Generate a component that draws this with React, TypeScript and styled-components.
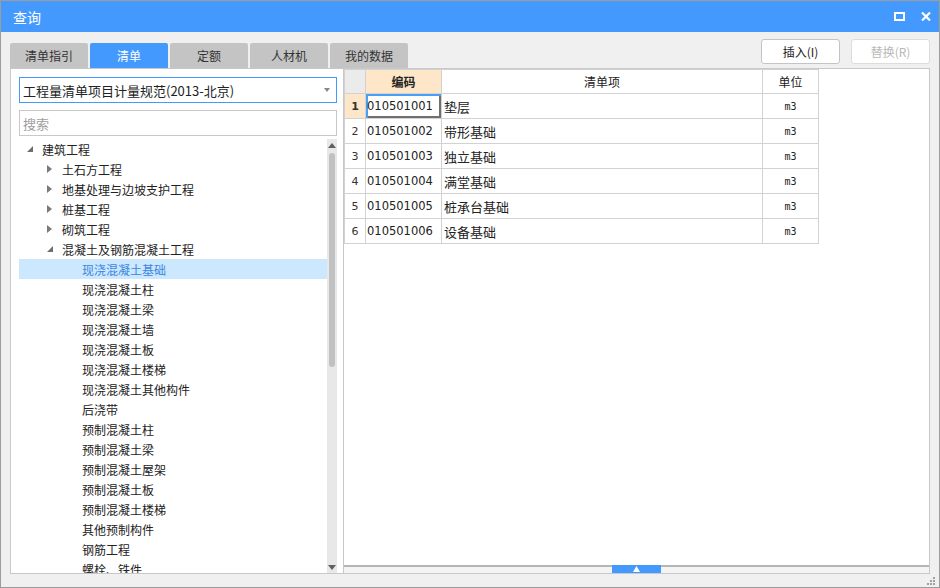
import React from 'react';
import styled, { createGlobalStyle } from 'styled-components';

const GlobalStyle = createGlobalStyle`
  html, body {
    margin: 0;
    padding: 0;
    background: #ffffff;
  }
  * {
    box-sizing: border-box;
  }
`;

const cjk = `"Noto Sans CJK SC", "Noto Sans", sans-serif`;
const blue = '#4499ff';

const Window = styled.div`
  position: relative;
  width: 940px;
  height: 588px;
  border: 1px solid #9c9c9c;
  display: flex;
  flex-direction: column;
  font-family: ${cjk};
  background: #f0f0f0;
  overflow: hidden;
`;

const TitleBar = styled.div`
  height: 31px;
  flex: none;
  background: ${blue};
  color: #fff;
  display: flex;
  align-items: center;
  justify-content: space-between;
  padding: 0 8px 0 12px;
  font-size: 14px;
`;

const TitleIcons = styled.div`
  display: flex;
  align-items: center;
  gap: 16px;
`;

const Body = styled.div`
  flex: 1;
  display: flex;
  flex-direction: column;
  padding: 0 9px 13px 9px;
  min-height: 0;
`;

const TopRow = styled.div`
  height: 36px;
  flex: none;
  display: flex;
  justify-content: space-between;
`;

const Tabs = styled.div`
  display: flex;
  gap: 2px;
  align-self: flex-end;
`;

const Tab = styled.div<{ $active?: boolean }>`
  width: 78px;
  height: 25px;
  border-radius: 2px 2px 0 0;
  background: ${p => (p.$active ? blue : '#c4c4c4')};
  color: ${p => (p.$active ? '#fff' : '#333')};
  font-size: 12px;
  display: flex;
  align-items: center;
  justify-content: center;
`;

const Buttons = styled.div`
  display: flex;
  gap: 11px;
  padding-top: 7px;
`;

const Button = styled.button<{ $disabled?: boolean }>`
  width: 79px;
  height: 25px;
  padding: 0;
  border: 1px solid ${p => (p.$disabled ? '#dcdcdc' : '#c4c4c4')};
  border-radius: 3px;
  background: #fff;
  color: ${p => (p.$disabled ? '#b8b8b8' : '#222')};
  font-family: ${cjk};
  font-size: 12px;
`;

const Main = styled.div`
  flex: 1;
  display: flex;
  min-height: 0;
`;

const LeftPanel = styled.div`
  width: 333px;
  flex: none;
  background: #fff;
  border: 1px solid #c8c8c8;
  border-right: none;
  padding: 8px 0 0 8px;
  display: flex;
  flex-direction: column;
  min-height: 0;
`;

const Select = styled.div`
  width: 318px;
  height: 26px;
  border: 1px solid ${blue};
  display: flex;
  align-items: center;
  justify-content: space-between;
  padding: 0 6px 0 3px;
  font-size: 13px;
  color: #222;
`;

const Caret = styled.span`
  width: 0;
  height: 0;
  border-left: 3px solid transparent;
  border-right: 3px solid transparent;
  border-top: 4px solid #888;
`;

const Search = styled.div`
  width: 318px;
  height: 26px;
  margin-top: 7px;
  border: 1px solid #c8c8c8;
  display: flex;
  align-items: center;
  padding: 0 3px;
  font-size: 13px;
  color: #a0a0a0;
`;

const TreeWrap = styled.div`
  flex: 1;
  width: 318px;
  margin-top: 3px;
  display: flex;
  min-height: 0;
  overflow: hidden;
`;

const TreeList = styled.div`
  flex: 1;
  overflow: hidden;
`;

const TreeRow = styled.div<{ $level: number; $selected?: boolean }>`
  height: 20px;
  display: flex;
  align-items: center;
  padding-left: ${p => 4 + p.$level * 20}px;
  background: ${p => (p.$selected ? '#cce8ff' : 'transparent')};
  color: ${p => (p.$selected ? '#3a86e0' : '#222')};
  font-size: 12px;
  white-space: nowrap;
`;

const Arrow = styled.span`
  width: 19px;
  flex: none;
  display: flex;
  align-items: center;
  padding-left: 4px;
`;

const Scrollbar = styled.div`
  width: 10px;
  flex: none;
  background: #e8e8e8;
  display: flex;
  flex-direction: column;
  align-items: center;
  padding-top: 4px;
`;

const ScrollThumb = styled.div`
  width: 6px;
  height: 214px;
  margin-top: 5px;
  border-radius: 3px;
  background: #c1c1c1;
`;

const ScrollSpacer = styled.div`
  flex: 1;
`;

const RightPanel = styled.div`
  flex: 1;
  background: #fff;
  border: 1px solid #c8c8c8;
  display: flex;
  flex-direction: column;
  min-height: 0;
`;

const TableArea = styled.div`
  flex: 1;
`;

const Grid = styled.table`
  border-collapse: collapse;
  table-layout: fixed;
  width: 474px;
`;

const HeadCell = styled.th<{ $accent?: boolean; $corner?: boolean }>`
  height: 24px;
  padding: 0;
  border: 1px solid #d2d2d2;
  font-size: 12px;
  font-weight: ${p => (p.$accent ? 700 : 400)};
  color: #222;
  background: ${p => (p.$accent ? '#fee6c8' : p.$corner ? '#ebebeb' : '#fff')};
  text-align: center;
`;

const NumCell = styled.td<{ $current?: boolean }>`
  height: 25px;
  padding: 0;
  border: 1px solid #d2d2d2;
  text-align: center;
  font-family: "DejaVu Sans", sans-serif;
  font-size: 11px;
  font-weight: ${p => (p.$current ? 700 : 400)};
  color: #333;
  background: ${p => (p.$current ? '#fee6c8' : '#fff')};
`;

const CodeCell = styled.td<{ $focused?: boolean }>`
  padding: 0 0 0 1px;
  border: 1px solid #d2d2d2;
  font-family: "DejaVu Sans", sans-serif;
  font-size: 11.5px;
  color: #222;
  box-shadow: ${p => (p.$focused ? 'inset 2px 2px 0 #4aa0f5, inset -2px -2px 0 #707070' : 'none')};
`;

const NameCell = styled.td`
  padding: 0 0 0 2px;
  border: 1px solid #d2d2d2;
  font-size: 13px;
  color: #222;
`;

const UnitCell = styled.td`
  padding: 0;
  border: 1px solid #d2d2d2;
  text-align: center;
  font-family: "DejaVu Sans Mono", monospace;
  font-size: 10px;
  color: #222;
`;

const Splitter = styled.div`
  height: 8px;
  flex: none;
  border-top: 2px solid #b6b6b6;
  background: #f4f4f4;
  display: flex;
  justify-content: center;
`;

const SplitHandle = styled.div`
  width: 49px;
  height: 8px;
  margin-top: -2px;
  background: ${blue};
  display: flex;
  align-items: center;
  justify-content: center;
`;

const Grip = styled.svg`
  position: absolute;
  right: 3px;
  bottom: 1px;
`;

const tree: { label: string; level: number; state?: 'open' | 'closed'; selected?: boolean }[] = [
  { label: '建筑工程', level: 0, state: 'open' },
  { label: '土石方工程', level: 1, state: 'closed' },
  { label: '地基处理与边坡支护工程', level: 1, state: 'closed' },
  { label: '桩基工程', level: 1, state: 'closed' },
  { label: '砌筑工程', level: 1, state: 'closed' },
  { label: '混凝土及钢筋混凝土工程', level: 1, state: 'open' },
  { label: '现浇混凝土基础', level: 2, selected: true },
  { label: '现浇混凝土柱', level: 2 },
  { label: '现浇混凝土梁', level: 2 },
  { label: '现浇混凝土墙', level: 2 },
  { label: '现浇混凝土板', level: 2 },
  { label: '现浇混凝土楼梯', level: 2 },
  { label: '现浇混凝土其他构件', level: 2 },
  { label: '后浇带', level: 2 },
  { label: '预制混凝土柱', level: 2 },
  { label: '预制混凝土梁', level: 2 },
  { label: '预制混凝土屋架', level: 2 },
  { label: '预制混凝土板', level: 2 },
  { label: '预制混凝土楼梯', level: 2 },
  { label: '其他预制构件', level: 2 },
  { label: '钢筋工程', level: 2 },
  { label: '螺栓、铁件', level: 2 },
];

const rows = [
  ['010501001', '垫层'],
  ['010501002', '带形基础'],
  ['010501003', '独立基础'],
  ['010501004', '满堂基础'],
  ['010501005', '桩承台基础'],
  ['010501006', '设备基础'],
];

const tabs = ['清单指引', '清单', '定额', '人材机', '我的数据'];

const ArrowIcon = ({ state }: { state?: 'open' | 'closed' }) => {
  if (state === 'open') {
    return (
      <svg width="6" height="6" viewBox="0 0 6 6">
        <polygon points="6,0 6,6 0,6" fill="#6e6e6e" />
      </svg>
    );
  }
  if (state === 'closed') {
    return (
      <svg width="5" height="8" viewBox="0 0 5 8">
        <polygon points="0,0 5,4 0,8" fill="#7a7a7a" />
      </svg>
    );
  }
  return null;
};

export default function App() {
  return (
    <>
      <GlobalStyle />
      <Window>
        <TitleBar>
          <span>查询</span>
          <TitleIcons>
            <svg width="11" height="9" viewBox="0 0 11 9">
              <rect x="1" y="1" width="9" height="7" fill="none" stroke="#fff" strokeWidth="2" />
            </svg>
            <svg width="10" height="9" viewBox="0 0 10 9">
              <path d="M1 0.5 L9 8.5 M9 0.5 L1 8.5" stroke="#fff" strokeWidth="2.2" />
            </svg>
          </TitleIcons>
        </TitleBar>
        <Body>
          <TopRow>
            <Tabs>
              {tabs.map(t => (
                <Tab key={t} $active={t === '清单'}>
                  {t}
                </Tab>
              ))}
            </Tabs>
            <Buttons>
              <Button>插入(I)</Button>
              <Button $disabled>替换(R)</Button>
            </Buttons>
          </TopRow>
          <Main>
            <LeftPanel>
              <Select>
                <span>工程量清单项目计量规范(2013-北京)</span>
                <Caret />
              </Select>
              <Search>搜索</Search>
              <TreeWrap>
                <TreeList>
                  {tree.map(n => (
                    <TreeRow key={n.label} $level={n.level} $selected={n.selected}>
                      <Arrow>
                        <ArrowIcon state={n.state} />
                      </Arrow>
                      {n.label}
                    </TreeRow>
                  ))}
                </TreeList>
                <Scrollbar>
                  <svg width="8" height="5" viewBox="0 0 8 5">
                    <polygon points="4,0 8,5 0,5" fill="#606060" />
                  </svg>
                  <ScrollThumb />
                  <ScrollSpacer />
                  <svg width="8" height="5" viewBox="0 0 8 5" style={{ marginBottom: 3 }}>
                    <polygon points="0,0 8,0 4,5" fill="#606060" />
                  </svg>
                </Scrollbar>
              </TreeWrap>
            </LeftPanel>
            <RightPanel>
              <TableArea>
                <Grid>
                  <colgroup>
                    <col style={{ width: 21 }} />
                    <col style={{ width: 76 }} />
                    <col style={{ width: 321 }} />
                    <col style={{ width: 56 }} />
                  </colgroup>
                  <thead>
                    <tr>
                      <HeadCell $corner />
                      <HeadCell $accent>编码</HeadCell>
                      <HeadCell>清单项</HeadCell>
                      <HeadCell>单位</HeadCell>
                    </tr>
                  </thead>
                  <tbody>
                    {rows.map(([code, name], i) => (
                      <tr key={code}>
                        <NumCell $current={i === 0}>{i + 1}</NumCell>
                        <CodeCell $focused={i === 0}>{code}</CodeCell>
                        <NameCell>{name}</NameCell>
                        <UnitCell>m3</UnitCell>
                      </tr>
                    ))}
                  </tbody>
                </Grid>
              </TableArea>
              <Splitter>
                <SplitHandle>
                  <svg width="7" height="6" viewBox="0 0 7 6">
                    <polygon points="3.5,0 7,6 0,6" fill="#fff" />
                  </svg>
                </SplitHandle>
              </Splitter>
            </RightPanel>
          </Main>
        </Body>
        <Grip width="9" height="9" viewBox="0 0 9 9">
          <rect x="6" y="0" width="2" height="2" fill="#a0a0a0" />
          <rect x="3" y="3" width="2" height="2" fill="#a0a0a0" />
          <rect x="6" y="3" width="2" height="2" fill="#a0a0a0" />
          <rect x="0" y="6" width="2" height="2" fill="#a0a0a0" />
          <rect x="3" y="6" width="2" height="2" fill="#a0a0a0" />
          <rect x="6" y="6" width="2" height="2" fill="#a0a0a0" />
        </Grip>
      </Window>
    </>
  );
}
